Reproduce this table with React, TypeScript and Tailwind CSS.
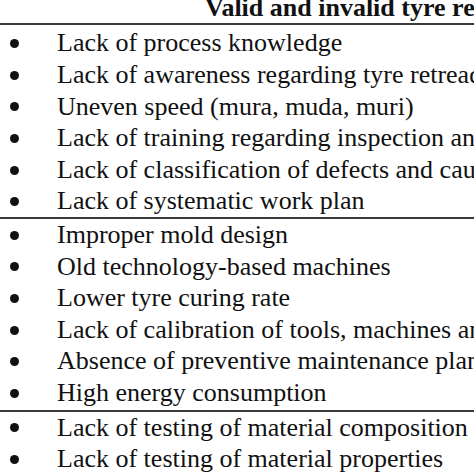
import React from "react";

const groups: string[][] = [
  [
    "Lack of process knowledge",
    "Lack of awareness regarding tyre retreading",
    "Uneven speed (mura, muda, muri)",
    "Lack of training regarding inspection and",
    "Lack of classification of defects and causes",
    "Lack of systematic work plan",
  ],
  [
    "Improper mold design",
    "Old technology-based machines",
    "Lower tyre curing rate",
    "Lack of calibration of tools, machines and",
    "Absence of preventive maintenance plan",
    "High energy consumption",
  ],
  [
    "Lack of testing of material composition",
    "Lack of testing of material properties",
  ],
];

function Row({ text }: { text: string }) {
  return (
    <div className="flex items-center h-[31.6px] leading-[31.6px] whitespace-nowrap">
      <div className="w-[57px] shrink-0 pl-[10px] flex items-center">
        <div className="w-[9px] h-[9px] rounded-full bg-[#111] mt-[1px]" />
      </div>
      <span>{text}</span>
    </div>
  );
}

export default function App() {
  return (
    <div
      className="w-[474px] h-[474px] overflow-hidden bg-white text-[#111] text-[26px]"
      style={{ fontFamily: '"Liberation Serif", "Times New Roman", serif' }}
    >
      <div className="border-b-2 border-[#3a3a3a] pb-[7px]">
        <div className="leading-[16px] h-[16px] font-bold whitespace-nowrap pl-[205px]">
          Valid and invalid tyre retreading issues
        </div>
      </div>
      <div className="pt-[2.4px] border-b-2 border-[#3a3a3a]">
        {groups[0].map((t) => (
          <Row key={t} text={t} />
        ))}
      </div>
      <div className="pb-[1px] border-b-2 border-[#3a3a3a]">
        {groups[1].map((t) => (
          <Row key={t} text={t} />
        ))}
      </div>
      <div>
        {groups[2].map((t) => (
          <Row key={t} text={t} />
        ))}
      </div>
    </div>
  );
}
